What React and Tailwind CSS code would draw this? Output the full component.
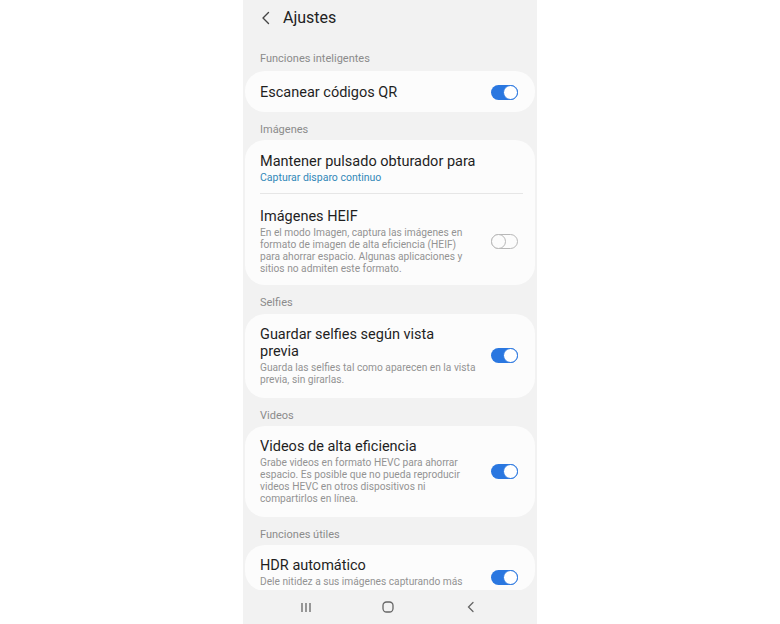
import React from "react";

function Toggle({ on }) {
  if (!on) {
    return (
      <div className="relative w-[27px] h-[15px] rounded-full border border-[#b8b8b8] shrink-0">
        <div className="absolute left-[-1px] top-[-1px] w-[15px] h-[15px] rounded-full border border-[#b8b8b8] bg-[#fcfcfc]" />
      </div>
    );
  }
  return (
    <div className="relative w-[27px] h-[15px] rounded-full bg-[#2a77e0] shrink-0">
      <div className="absolute right-0 top-0 w-[15px] h-[15px] rounded-full border-[1.5px] border-[#2a77e0] bg-white" />
    </div>
  );
}

function Label({ children, className = "" }) {
  return (
    <div className={`pl-[17px] text-[11px] leading-[13px] text-[#8b8b8b] ${className}`}>
      {children}
    </div>
  );
}

function Desc({ lines }) {
  return (
    <p className="mt-[1.5px] text-[10.2px] leading-[12px] text-[#939393]">
      {lines.map((l, i) => (
        <span key={i}>
          {l}
          {i < lines.length - 1 && <br />}
        </span>
      ))}
    </p>
  );
}

export default function App() {
  return (
    <div className="w-full h-[624px] bg-white flex justify-center" style={{ fontFamily: "Roboto, 'Noto Sans', sans-serif" }}>
      <div className="w-[294px] h-full bg-[#f2f2f2] flex flex-col overflow-hidden">
        {/* Header */}
        <div className="h-[35px] flex items-center shrink-0">
          <svg className="ml-[17px]" width="12" height="14" viewBox="0 0 12 14" fill="none">
            <path d="M8.5 1.5 L3 7 L8.5 12.5" stroke="#444" strokeWidth="1.4" strokeLinecap="round" strokeLinejoin="round" />
          </svg>
          <span className="ml-[11px] text-[16px] text-[#222]">Ajustes</span>
        </div>

        <div className="flex-1 overflow-hidden">
          <Label className="pt-[17px] pb-[6px]">Funciones inteligentes</Label>
          <div className="mx-[2px] h-[41px] bg-[#fcfcfc] rounded-[20px] flex items-center justify-between pl-[15px] pr-[17px] pt-[2px]">
            <span className="text-[14.5px] text-[#1f1f1f]">Escanear códigos QR</span>
            <Toggle on />
          </div>

          <Label className="pt-[11px] pb-[4px]">Imágenes</Label>
          <div className="mx-[2px] bg-[#fcfcfc] rounded-[20px]">
            <div className="pl-[15px] pt-[12.5px] pb-[8px]">
              <div className="text-[14.5px] leading-[17px] text-[#1f1f1f]">Mantener pulsado obturador para</div>
              <div className="mt-[1.5px] text-[10.5px] leading-[14px] text-[#3288b8]">Capturar disparo continuo</div>
            </div>
            <div className="ml-[15px] mr-[12px] h-px bg-[#e6e6e6]" />
            <div className="pl-[15px] pr-[17px] pt-[14px] pb-[10px] flex items-center justify-between">
              <div>
                <div className="text-[14.5px] leading-[17px] text-[#1f1f1f]">Imágenes HEIF</div>
                <Desc
                  lines={[
                    "En el modo Imagen, captura las imágenes en",
                    "formato de imagen de alta eficiencia (HEIF)",
                    "para ahorrar espacio. Algunas aplicaciones y",
                    "sitios no admiten este formato.",
                  ]}
                />
              </div>
              <Toggle on={false} />
            </div>
          </div>

          <Label className="pt-[11px] pb-[5px]">Selfies</Label>
          <div className="mx-[2px] bg-[#fcfcfc] rounded-[20px] pl-[15px] pr-[17px] pt-[12.5px] pb-[12px] flex items-center justify-between">
            <div>
              <div className="text-[14.5px] leading-[17px] text-[#1f1f1f]">
                Guardar selfies según vista
                <br />
                previa
              </div>
              <Desc lines={["Guarda las selfies tal como aparecen en la vista", "previa, sin girarlas."]} />
            </div>
            <Toggle on />
          </div>

          <Label className="pt-[11px] pb-[4px]">Videos</Label>
          <div className="mx-[2px] bg-[#fcfcfc] rounded-[20px] pl-[15px] pr-[17px] pt-[12.5px] pb-[12px] flex items-center justify-between">
            <div>
              <div className="text-[14.5px] leading-[17px] text-[#1f1f1f]">Videos de alta eficiencia</div>
              <Desc
                lines={[
                  "Grabe videos en formato HEVC para ahorrar",
                  "espacio. Es posible que no pueda reproducir",
                  "videos HEVC en otros dispositivos ni",
                  "compartirlos en línea.",
                ]}
              />
            </div>
            <Toggle on />
          </div>

          <Label className="pt-[11px] pb-[4px]">Funciones útiles</Label>
          <div className="mx-[2px] h-[46px] bg-[#fcfcfc] rounded-[20px] pl-[15px] pr-[17px] pt-[12.5px] flex items-start justify-between">
            <div>
              <div className="text-[14.5px] leading-[17px] text-[#1f1f1f]">HDR automático</div>
              <Desc lines={["Dele nitidez a sus imágenes capturando más"]} />
            </div>
            <div className="pt-[13px]">
              <Toggle on />
            </div>
          </div>
        </div>

        {/* Nav bar */}
        <div className="h-[34px] shrink-0 bg-[#f2f2f2] flex items-center">
          <svg className="ml-[57px]" width="12" height="11" viewBox="0 0 12 11">
            <path d="M2 1v9M6 1v9M10 1v9" stroke="#666" strokeWidth="1.3" />
          </svg>
          <svg className="ml-[70px]" width="12" height="12" viewBox="0 0 12 12">
            <rect x="1" y="1" width="10" height="10" rx="3.5" fill="none" stroke="#666" strokeWidth="1.3" />
          </svg>
          <svg className="ml-[72px]" width="10" height="12" viewBox="0 0 10 12">
            <path d="M7 1.5 L2.5 6 L7 10.5" fill="none" stroke="#666" strokeWidth="1.3" strokeLinecap="round" />
          </svg>
        </div>
      </div>
    </div>
  );
}
